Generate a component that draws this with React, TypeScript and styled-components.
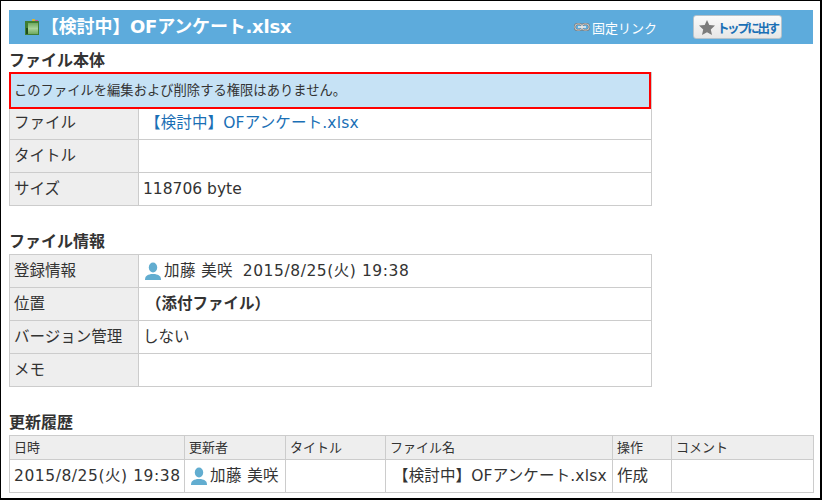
import { createGlobalStyle } from "styled-components";
import styled from "styled-components";

const GlobalStyle = createGlobalStyle`
  html, body {
    margin: 0;
    padding: 0;
    background: #fff;
  }
  body {
    font-family: "DejaVu Sans", "Noto Sans CJK JP", sans-serif;
    color: #333;
  }
`;

const Page = styled.div`
  box-sizing: border-box;
  width: 822px;
  height: 500px;
  border: 1px solid #000;
  border-right-width: 2px;
  border-bottom-width: 2px;
  padding: 9px 7px 0 8px;
  overflow: hidden;
`;

const TitleBar = styled.header`
  display: flex;
  align-items: center;
  height: 34px;
  background: #5dabdc;
  padding-left: 16px;
  color: #fff;
`;

const Title = styled.h1`
  flex: 1;
  margin: 0 0 0 1px;
  font-size: 18px;
  font-weight: 700;
  line-height: 34px;
  letter-spacing: -0.2px;
`;

const FixedLink = styled.a`
  display: flex;
  align-items: center;
  gap: 2px;
  font-size: 13px;
  color: #fff;
  margin-right: 36px;
`;

const TopButton = styled.button`
  display: flex;
  align-items: center;
  gap: 2px;
  box-sizing: border-box;
  width: 89px;
  height: 24px;
  margin-right: 31px;
  padding: 0 0 0 5px;
  border: 1px solid #b5c2cb;
  border-radius: 3px;
  background: linear-gradient(#fafafa, #e6e6e6);
  color: #1a6fb5;
  font-family: inherit;
  font-size: 12.5px;
  font-weight: 700;
  letter-spacing: -2.4px;
  white-space: nowrap;
`;

const SectionTitle = styled.h2<{ $top: number; $bottom?: number }>`
  margin: ${(p) => p.$top}px 0 ${(p) => p.$bottom ?? 1}px 0;
  font-size: 16px;
  font-weight: 700;
  line-height: 22px;
  height: 22px;
  color: #333;
`;

const Notice = styled.div`
  box-sizing: border-box;
  width: 642px;
  height: 37px;
  padding-left: 3px;
  border: 2px solid #f00;
  background: #c6e2f5;
  box-shadow: 1px 0 0 #ccc;
  font-size: 13.300px;
  line-height: 33px;
  position: relative;
  z-index: 1;
  margin-bottom: -3px;
`;

const DetailTable = styled.table`
  border-collapse: collapse;
  table-layout: fixed;
  width: 643px;
  font-size: 15.5px;
  line-height: 20px;

  td, th {
    border: 1px solid #ccc;
    height: 33px;
    padding: 0 4px;
    box-sizing: border-box;
    font-weight: 400;
    text-align: left;
    white-space: nowrap;
  }
  th {
    width: 129px;
    background: #eee;
  }
`;

const HistoryTable = styled.table`
  border-collapse: collapse;
  table-layout: fixed;
  width: 804px;
  font-size: 15.5px;
  line-height: 20px;

  th, td {
    border: 1px solid #ccc;
    padding: 0 4px;
    box-sizing: border-box;
    text-align: left;
    white-space: nowrap;
    overflow: hidden;
  }
  th {
    height: 24px;
    background: #eee;
    font-size: 13px;
    font-weight: 400;
  }
  td {
    height: 33px;
  }
`;

const FileLink = styled.a`
  color: #1a6fb5;
  margin-left: 2px;
  letter-spacing: 0.15px;
`;

const Strong = styled.span`
  font-weight: 700;
  margin-left: 3px;
`;

const Person = styled.span`
  display: inline-flex;
  align-items: center;
  gap: 2px;
  margin-left: 1px;
  letter-spacing: 0.4px;
  vertical-align: middle;
`;

const DateText = styled.span`
  letter-spacing: 0.55px;
`;

const FileName = styled.span`
  margin-left: 3px;
  letter-spacing: 0.15px;
`;

const BookIcon = () => (
  <svg width="15" height="16" viewBox="0 0 15 16">
    <defs>
      <linearGradient id="bookFace" x1="0" y1="0" x2="0" y2="1">
        <stop offset="0" stopColor="#6fa95f" />
        <stop offset="0.5" stopColor="#a9d39a" />
        <stop offset="1" stopColor="#6fa95f" />
      </linearGradient>
    </defs>
    <rect x="7" y="0" width="3" height="3" fill="#d6b13a" />
    <rect x="10" y="1" width="3" height="2" fill="#c65a9a" />
    <rect x="0" y="2" width="14" height="14" fill="#3f7d33" />
    <rect x="3" y="4" width="10" height="11" fill="url(#bookFace)" />
    <rect x="1" y="9" width="2" height="6" fill="#1f4d1c" />
  </svg>
);

const LinkIcon = () => (
  <svg width="16" height="8" viewBox="0 0 16 8" fill="none">
    <rect x="1" y="1" width="7" height="6" rx="2.500" stroke="#777" strokeWidth="2" />
    <rect x="8" y="1" width="7" height="6" rx="2.500" stroke="#777" strokeWidth="2" />
    <rect x="1" y="1" width="7" height="6" rx="2.500" stroke="#e4e4e4" strokeWidth="0.800" />
    <rect x="8" y="1" width="7" height="6" rx="2.500" stroke="#e4e4e4" strokeWidth="0.800" />
    <path d="M4 4h8" stroke="#f4f4f4" strokeWidth="1.500" />
  </svg>
);

const StarIcon = () => (
  <svg width="16" height="15" viewBox="0 0 16 15">
    <path d="M8 0l2.300 5 5.700.6-4.200 3.800 1.200 5.600L8 12.200 3 15l1.200-5.600L0 5.600l5.700-.6z" fill="#7c7c7c" />
  </svg>
);

const UserIcon = () => (
  <svg width="18" height="18" viewBox="0 0 18 18" fill="#62add0">
    <ellipse cx="9" cy="5.500" rx="4.200" ry="5" />
    <path d="M1 18c0-4 2-5 6-6h4c4 1 6 2 6 6z" />
  </svg>
);

const historyCols = [175, 101, 100, 227, 59, 142];

export default function App() {
  return (
    <>
      <GlobalStyle />
      <Page>
        <TitleBar>
          <BookIcon />
          <Title>【検討中】OFアンケート.xlsx</Title>
          <FixedLink>
            <LinkIcon />
            固定リンク
          </FixedLink>
          <TopButton>
            <StarIcon />
            トップに出す
          </TopButton>
        </TitleBar>

        <SectionTitle $top={6} $bottom={0}>ファイル本体</SectionTitle>
        <Notice>このファイルを編集および削除する権限はありません。</Notice>
        <DetailTable>
          <tbody>
            <tr>
              <th>ファイル</th>
              <td><FileLink>【検討中】OFアンケート.xlsx</FileLink></td>
            </tr>
            <tr>
              <th>タイトル</th>
              <td></td>
            </tr>
            <tr>
              <th>サイズ</th>
              <td>118706 byte</td>
            </tr>
          </tbody>
        </DetailTable>

        <SectionTitle $top={25}>ファイル情報</SectionTitle>
        <DetailTable>
          <tbody>
            <tr>
              <th>登録情報</th>
              <td>
                <Person><UserIcon />加藤 美咲</Person>&nbsp; <DateText>2015/8/25(火) 19:38</DateText>
              </td>
            </tr>
            <tr>
              <th>位置</th>
              <td><Strong>（添付ファイル）</Strong></td>
            </tr>
            <tr>
              <th>バージョン管理</th>
              <td>しない</td>
            </tr>
            <tr>
              <th>メモ</th>
              <td></td>
            </tr>
          </tbody>
        </DetailTable>

        <SectionTitle $top={25}>更新履歴</SectionTitle>
        <HistoryTable>
          <colgroup>
            {historyCols.map((w) => (
              <col key={w} style={{ width: w }} />
            ))}
          </colgroup>
          <thead>
            <tr>
              <th>日時</th>
              <th>更新者</th>
              <th>タイトル</th>
              <th>ファイル名</th>
              <th>操作</th>
              <th>コメント</th>
            </tr>
          </thead>
          <tbody>
            <tr>
              <td><DateText>2015/8/25(火) 19:38</DateText></td>
              <td><Person><UserIcon />加藤 美咲</Person></td>
              <td></td>
              <td><FileName>【検討中】OFアンケート.xlsx</FileName></td>
              <td>作成</td>
              <td></td>
            </tr>
          </tbody>
        </HistoryTable>
      </Page>
    </>
  );
}
